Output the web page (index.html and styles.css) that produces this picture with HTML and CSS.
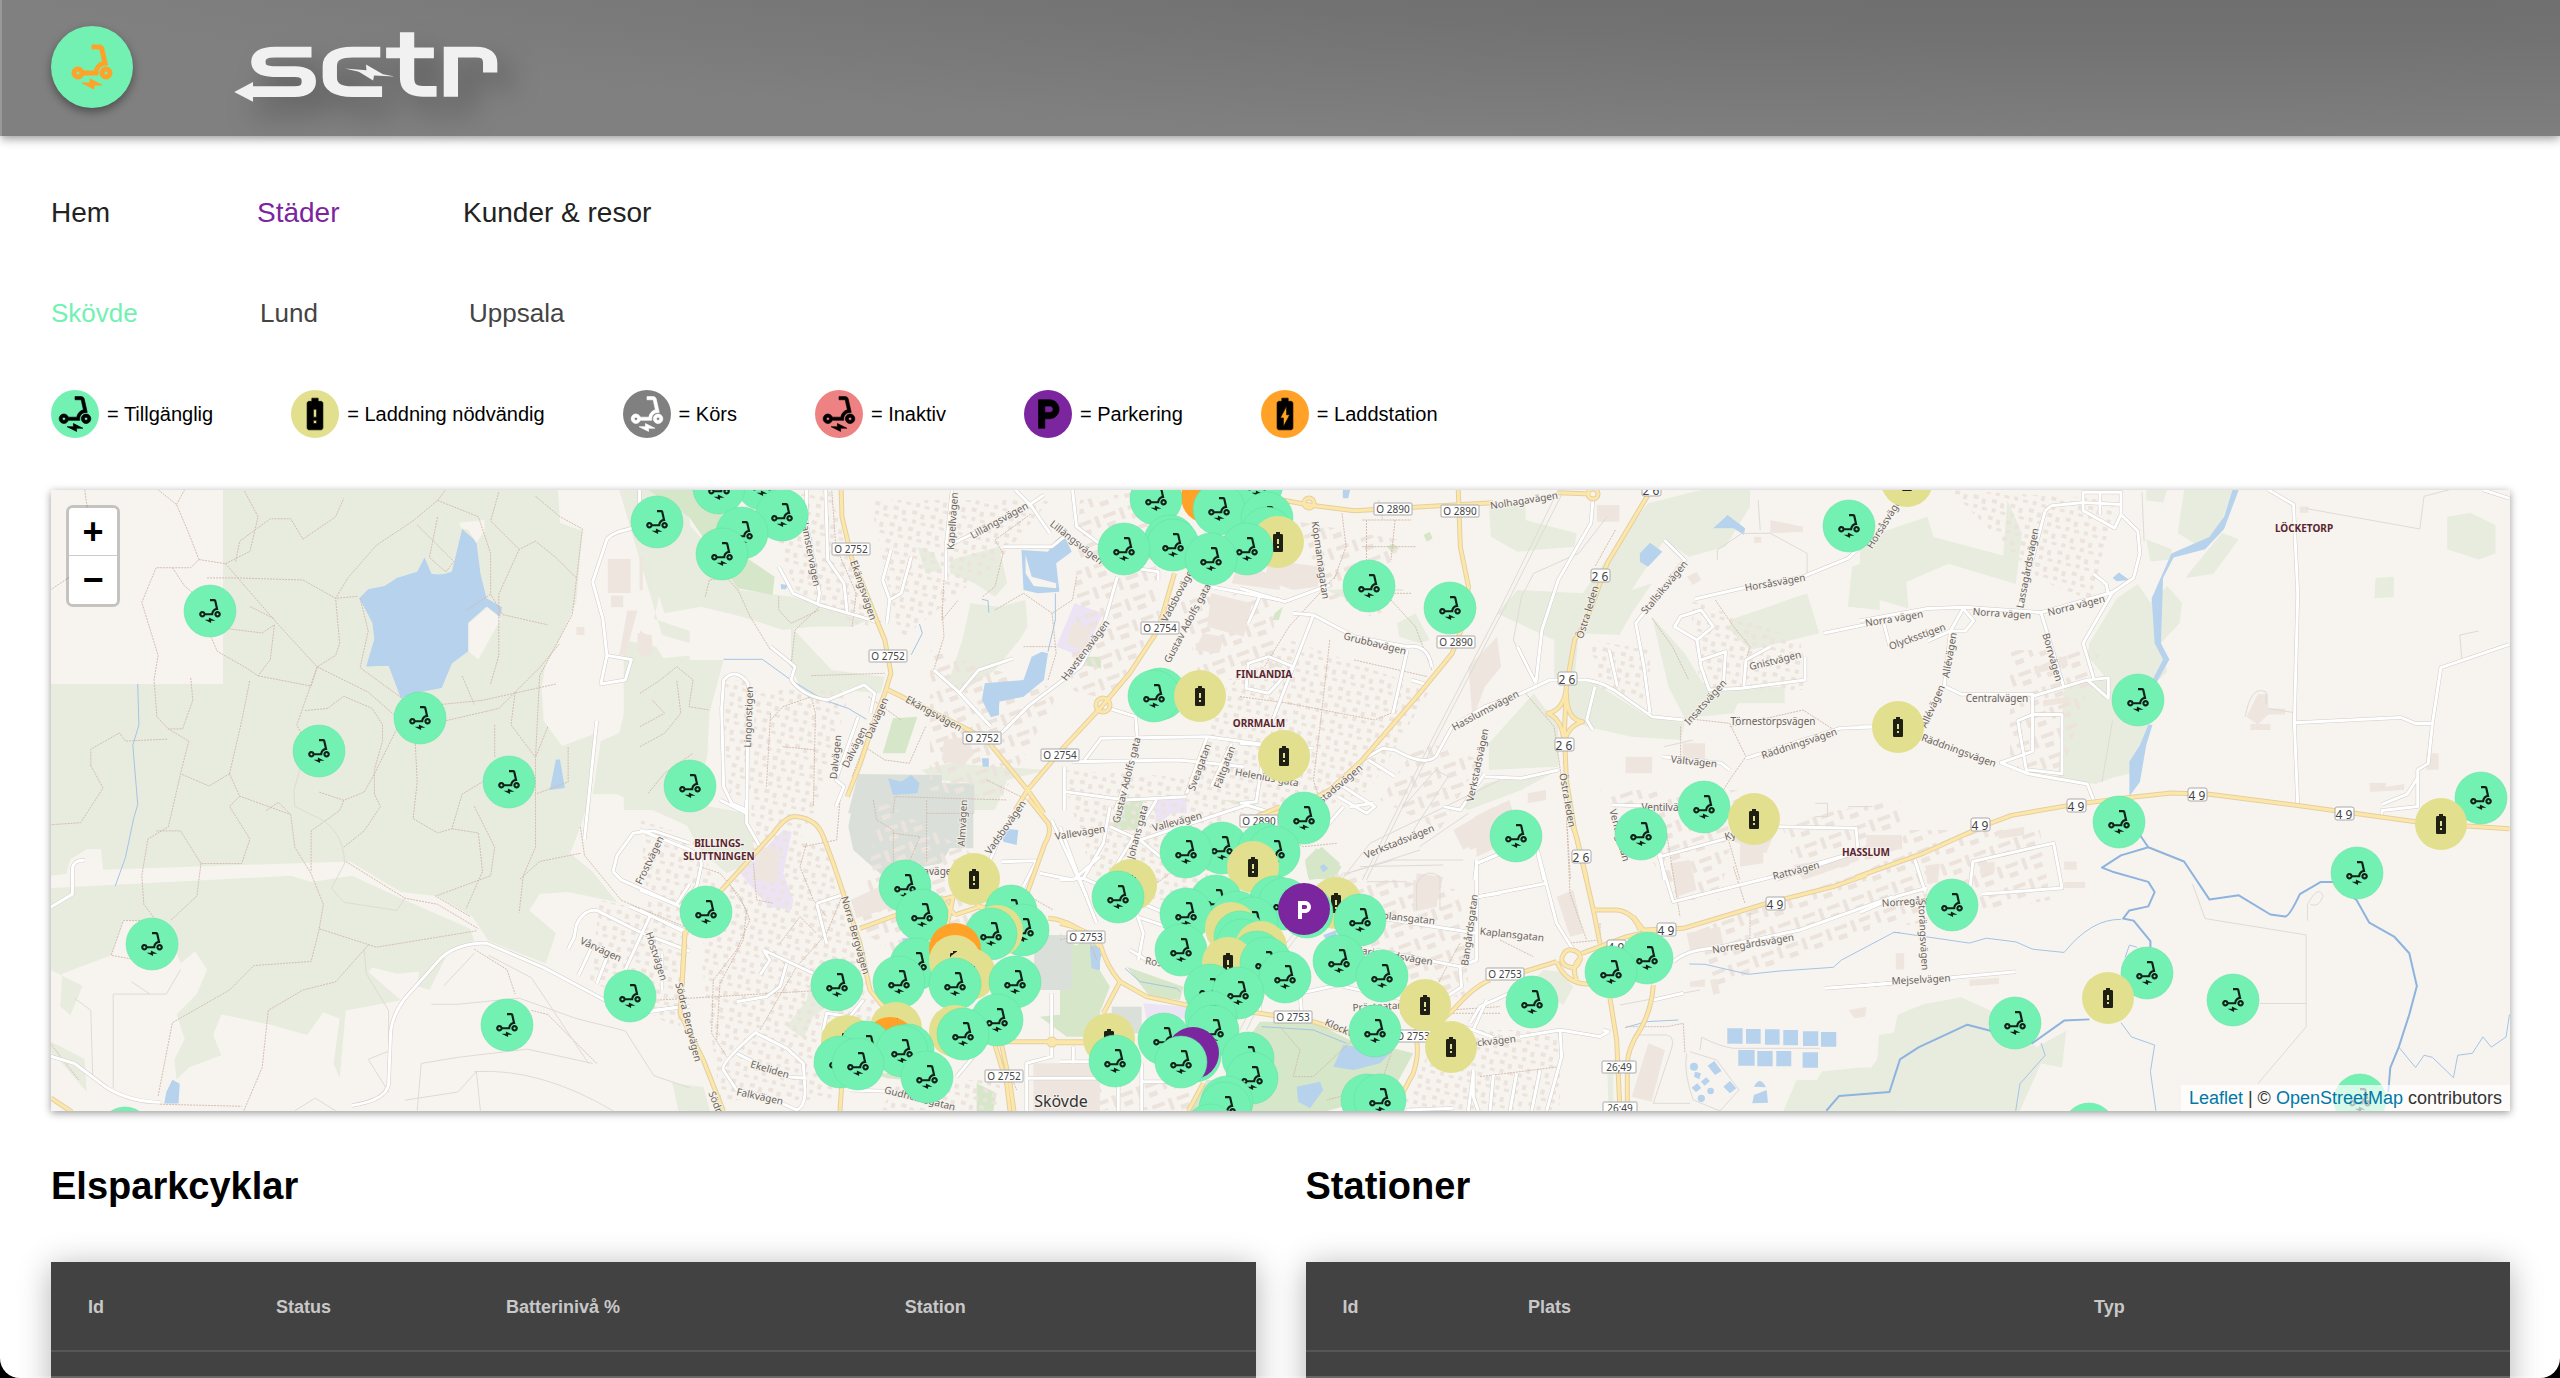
FILE: index.html
```html
<!DOCTYPE html>
<html lang="sv">
<head>
<meta charset="utf-8">
<title>sctr – Städer</title>
<link rel="stylesheet" href="styles.css">
</head>
<body>
<svg class="sprite" aria-hidden="true">
  <defs>
    <symbol id="i-scooter" viewBox="0 0 24 24"><path d="M7.82 16H15v-1c0-2.21 1.79-4 4-4h.74l-1.9-8.44C17.63 1.65 16.82 1 15.89 1H12v2h3.89l1.4 6.25h-.01c-2.16.65-3.81 2.5-4.15 4.75H7.82C7.34 12.66 5.96 11.75 4.4 12.04c-1.16.21-2.13 1.17-2.34 2.34C1.71 16.34 3.23 18 5 18c1.31 0 2.42-.83 2.82-2zM5 16c-.55 0-1-.45-1-1s.45-1 1-1 1 .45 1 1-.45 1-1 1zM19 12c-1.66 0-3 1.34-3 3s1.34 3 3 3 3-1.34 3-3-1.34-3-3-3zm0 4c-.55 0-1-.45-1-1s.45-1 1-1 1 .45 1 1-.45 1-1 1zM11 20H7l6 3v-2h4l-6-3z"/></symbol>
    <symbol id="i-alert" viewBox="0 0 24 24"><path d="M15.67 4H14V2h-4v2H8.33C7.6 4 7 4.6 7 5.33v15.33C7 21.4 7.6 22 8.33 22h7.33c.74 0 1.34-.6 1.34-1.33V5.33C17 4.6 16.4 4 15.67 4zM13 18h-2v-2h2v2zm0-4h-2V9h2v5z"/></symbol>
    <symbol id="i-charge" viewBox="0 0 24 24"><path d="M15.67 4H14V2h-4v2H8.33C7.6 4 7 4.6 7 5.33v15.33C7 21.4 7.6 22 8.33 22h7.33c.74 0 1.34-.6 1.34-1.33V5.33C17 4.6 16.4 4 15.67 4zM11 20v-5.5H9L13 7v5.5h2L11 20z"/></symbol>
    <symbol id="i-parking" viewBox="0 0 24 24"><path d="M13 3H6v18h4v-6h3c3.31 0 6-2.69 6-6s-2.69-6-6-6zm.2 8H10V7h3.2c1.1 0 2 .9 2 2s-.9 2-2 2z"/></symbol>
    <g id="s"><circle r="26" fill="#72f1b2" stroke="#63e0a2" stroke-opacity=".5"/><use class="ink" href="#i-scooter" x="-13" y="-13" width="26" height="26"/></g>
    <g id="b"><circle r="26" fill="#e2e08e"/><use class="ink" href="#i-alert" x="-12" y="-12" width="24" height="24"/></g>
    <g id="c"><circle r="26" fill="#ffa227"/><use class="ink" href="#i-charge" x="-12" y="-12" width="24" height="24"/></g>
    <g id="p"><circle r="26" fill="#7b259f"/><use href="#i-parking" x="-12" y="-11" width="24" height="24" fill="#fff"/></g>
  </defs>
</svg>

<header class="top">
  <a class="badge" href="#" aria-label="Start"><svg width="48" height="48"><use href="#i-scooter"/></svg></a>
  <svg class="wordmark" viewBox="520 95 600 215" preserveAspectRatio="none" role="img" aria-label="sctr">
    <g fill="none" stroke="#f1f1f1" stroke-width="32">
      <path d="M698 158H616Q579 158 579 187Q579 216 612 216H660Q692 216 692 246Q692 276 660 276H560"/>
      <path d="M852 158H790Q739 158 739 200V234Q739 276 790 276H856"/>
      <path d="M912 99V236Q912 275 946 275H978M865 160H972"/>
      <path d="M1010 291V158H1066Q1098 158 1098 190V219"/>
    </g>
    <path fill="#f1f1f1" d="M525 277L567 247V306ZM773 207L821 212L820 195L858 224L884 231L838 228L836 243L804 217Z"/>
  </svg>
</header>

<main class="page">
  <nav class="nav nav-main">
    <a href="#">Hem</a><a href="#" class="active">Städer</a><a href="#">Kunder &amp; resor</a>
  </nav>
  <nav class="nav nav-city">
    <a href="#" class="active">Skövde</a><a href="#">Lund</a><a href="#">Uppsala</a>
  </nav>
  <ul class="legend">
    <li><span class="dot green"><svg><use href="#i-scooter"/></svg></span>= Tillgänglig</li>
    <li><span class="dot yellow"><svg><use href="#i-alert"/></svg></span>= Laddning nödvändig</li>
    <li><span class="dot gray"><svg><use href="#i-scooter"/></svg></span>= Körs</li>
    <li><span class="dot red"><svg><use href="#i-scooter"/></svg></span>= Inaktiv</li>
    <li><span class="dot purple"><svg><use href="#i-parking"/></svg></span>= Parkering</li>
    <li><span class="dot orange"><svg><use href="#i-charge"/></svg></span>= Laddstation</li>
  </ul>

  <section class="map">
    <svg class="canvas" viewBox="51 490 2459 621" preserveAspectRatio="xMidYMid slice">
      <defs>
        <pattern id="houses" width="19" height="17" patternUnits="userSpaceOnUse" patternTransform="rotate(14)"><path fill="#ece3dc" d="M2 2h5v4h-5zM11 4h4v5h-4zM4 11h4v4h-4zM13 12h5v3h-5z"/></pattern>
        <pattern id="houses2" width="26" height="22" patternUnits="userSpaceOnUse" patternTransform="rotate(-20)"><path fill="#ece3dc" d="M2 3h13v4h-13zM19 2h4v12h-4zM3 12h9v5h-9z"/></pattern>

        <path id="rA" vector-effect="non-scaling-stroke" transform="translate(50 480) scale(.408)" d="M0 1048L55 1015V950Q60 930 85 932M0 1412L60 1430L140 1490Q200 1525 270 1525M740 1533Q825 1520 830 1480L835 1350Q840 1310 870 1270L960 1170Q1000 1135 1070 1135L1210 1195L1360 1275M1445 24V80Q1440 115 1420 120Q1375 130 1365 145L1330 250L1355 340L1365 430L1425 440L1410 490L1350 500L1365 430M1340 590L1310 880M1380 960L1390 920L1430 865L1480 860L1568 890M1380 960L1400 980L1535 1040L1568 990M1270 1150L1285 1120L1290 1090Q1310 1050 1340 1055L1450 1110L1568 1155M1470 1070L1410 1200M1330 1140L1295 1215M1365 1170L1340 1235M1470 1300L1568 1290M1420 1045L1568 1110M1500 1160V1250"/>
        <path id="rB" vector-effect="non-scaling-stroke" transform="translate(640 480) scale(.408 .3333)" d="M455 30L460 240L500 310L508 400M750 300V200L765 30M750 200L810 165L960 70L990 45M920 30L960 80L1005 160M1060 30L1070 140L1125 190M1170 290L1140 420L1080 560L950 680L885 760M720 570L780 635L860 740M785 635L830 570L915 535M340 260L375 340L440 375L540 410L590 430M408 30V130L440 340L435 375M615 210L595 300L612 360L605 430M665 230L640 340L612 360M1190 260L1270 275V300M1400 320L1568 360M1135 680L1215 710M1090 840L1130 775L1390 770L1568 800M1060 845L1320 840L1480 860M1040 990V860M1390 770L1340 940M1450 790L1400 920M1215 710L1220 800L1165 990M1040 935L1190 960L1340 950M320 500L380 560L370 600Q400 650 460 660L550 615L575 640L565 700M200 690L205 600Q235 560 265 610L262 990M200 680L205 920L225 970L260 990M480 980L500 920L480 900L535 710M890 200L1010 200L1040 170"/>
        <path id="rC" vector-effect="non-scaling-stroke" transform="translate(640 800) scale(.3333)" d="M0 90L150 150Q190 170 183 200L170 260L120 320L100 310L0 270M0 330L140 400M320 0V70L360 140M240 0L320 40M370 450L520 520M440 490L420 560L380 590L290 605M370 450L390 480L360 525M530 310L620 280M530 310L560 430M350 695Q240 790 250 810L290 870L380 890L470 930Q495 920 495 870L490 790L440 745L350 700M0 640L120 620M290 760L350 790M440 830L500 835M630 870L780 875L940 920M950 830L1000 770M1235 580V770L1160 790V933M1160 835H1380M1300 740V790M1085 185L1190 182L1150 260M1235 60L1340 290M1200 220L1300 240L1380 170M1050 180L1090 90M550 690L560 640L630 650L670 600"/>
        <path id="rD" vector-effect="non-scaling-stroke" transform="translate(1060 800) scale(.3333)" d="M0 80L60 240L110 370M0 240L70 235L130 130L150 20M150 80L240 120L300 170M240 120L560 15L640 40M290 0L160 210M70 235L340 350M230 350L380 400M210 450L260 480L380 500M235 480L250 400L230 340M390 200L300 170M600 640V560M720 580L860 550M715 520L725 640M850 560L1040 600M900 345L1250 400M950 450L1200 500M1250 180V480L1200 500L1205 560L1130 610M1250 190L1320 160M1250 290L1320 280M1180 670L1240 690L1320 720M1240 690L1280 600M245 790V933M0 785H100M175 933V760M245 845H400M1040 930L1180 925M1240 820L1225 933M790 90L850 20M870 20L940 10"/>
        <path id="rE" vector-effect="non-scaling-stroke" transform="translate(1240 480) scale(.408 .3333)" d="M865 60L860 130L780 300L740 450L725 610M680 500L725 610M520 740L600 680L690 640L760 600L850 600Q900 610 940 650L1010 710L1090 720M870 620L850 720L865 750M1040 180L1090 240L970 430L990 560L1005 700M1115 357L1230 325L1380 290L1490 235L1530 190M1120 480L1065 440L1080 410L1130 390L1160 440L1120 480L1130 560L1150 630L1230 625L1385 600V530M1130 540L1190 515L1185 610M1235 620L1240 540L1300 500M1430 460L1568 425M1240 835L1470 745L1568 740M905 510L925 620M520 740L480 830Q450 860 380 810L350 805L300 840M315 840L380 890M600 890L690 895L780 870M500 980L540 990L600 880M0 325L110 365L220 315M130 400L180 405L280 470L410 500Q460 490 470 560M180 405L80 720M410 510L375 700M420 600L460 615M50 345L20 430M910 975L1110 980M1320 1040L1510 1045L1515 1115M1030 1130L1210 1070M1040 1200L1030 1120M575 1200L580 1150L640 1120M730 1120L745 1200M0 790L180 805M0 970L40 965L60 800M240 910L330 980L310 1000L240 950M1035 830L1180 850L1200 870M1310 1200L1515 1115M20 550L70 530L130 560L70 640L15 625Z"/>
        <path id="rF" vector-effect="non-scaling-stroke" transform="translate(1860 480) scale(.4209 .408)" d="M0 345L160 315L250 312L430 325L600 275L650 240L665 180L660 125L620 85M440 75L380 310M440 75L455 63L530 55L620 60V85L605 118L530 75V30H620V60M570 30V85M600 275L530 400L555 485M430 325L485 510M410 530L540 490L590 485V535L540 490M200 505L240 525H410V665L335 693L400 720L540 745L555 785M200 505L215 370L160 395M215 370L245 315L270 345L250 370H215M55 345L70 405M970 24L1030 60L1040 280L1032 595L1040 798M1032 595L1285 582L1320 597H1360M1543 403L1380 460L1360 597L1350 695L1325 710V800L1240 810V825M1325 730L1300 770L1240 795M260 1015L268 935L460 890L480 1000L290 1015M130 930L155 1010M0 1060L90 1020L160 1000M0 1240L370 1205M555 230L585 255L590 280M0 605H90M1480 24L1543 45M410 575H480V720L395 710L375 590Z"/>
        <path id="rG" vector-effect="non-scaling-stroke" transform="translate(1400 800) scale(.3333)" d="M235 290L440 250M410 140L470 370L520 450M210 670L240 620L340 575M360 710L480 690L600 710L625 695L610 690M480 690L485 770L440 933M775 160L820 305L1100 235L1340 165M820 485Q860 450 940 445L1200 390L1480 290M1275 565L1480 550M280 825L270 933M350 820L330 933M220 810V890L235 933M420 810L395 933M760 600L850 580"/>

        <path id="mB" vector-effect="non-scaling-stroke" transform="translate(640 480) scale(.408 .3333)" d="M493 30L495 110L520 240L545 310L580 420L600 480L615 580L600 640L575 720L540 850L508 950M600 625L790 740L850 780L950 930L990 1000M1310 280L1270 450L1200 580L1135 675L1040 800L950 930L920 990"/>
        <path id="mC" vector-effect="non-scaling-stroke" transform="translate(640 800) scale(.3333)" d="M245 270L400 100Q440 45 470 50Q530 55 550 110L580 190L610 280L660 430L690 570L730 620M245 270L135 400L120 640L190 780L250 933M660 385L770 345L900 300L940 290L920 380M1165 -5L1225 70Q1235 100 1215 130L1165 270L1140 340M945 345L1020 320L1100 330M900 290L945 345M1010 310L1030 330M1225 355Q1300 360 1380 440M605 860L600 933M1050 725H1340M1065 735L1100 850L1110 933M1085 735L1110 850L1122 933"/>
        <path id="mD" vector-effect="non-scaling-stroke" transform="translate(1060 800) scale(.3333)" d="M0 370Q90 390 120 430Q140 500 180 545L260 590L380 615L600 640L760 665L870 700H1060Q1085 740 1060 820L1000 930M180 545L130 640M590 50L660 20M385 933L430 850M1100 700L1180 630Q1240 560 1290 540M-30 728H75"/>
        <path id="mE" vector-effect="non-scaling-stroke" transform="translate(1240 480) scale(.408 .3333)" d="M80 55L170 75L280 92L620 68M780 38L860 42M535 30L540 200L560 320L545 440L520 520L440 640L300 840L220 930L150 975L60 1010M1000 45L900 250L850 420L820 480L800 620L795 760L800 900L820 1050L850 1200M800 620Q795 690 755 700Q790 720 793 780M800 640Q800 720 840 725Q800 740 796 790"/>
        <path id="mF" vector-effect="non-scaling-stroke" transform="translate(1860 480) scale(.4209 .408)" d="M-10 974L150 915L300 845L360 822L510 795L640 778L740 767L830 770L1040 798L1230 825L1350 842L1543 855"/>
        <path id="mG" vector-effect="non-scaling-stroke" transform="translate(1400 800) scale(.3333)" d="M510 60L530 110L580 330L600 430M580 330H650Q700 335 720 390M700 350L730 390L850 385L1100 310L1300 260L1400 225M340 525L470 485M545 460L680 410L770 390M470 485Q500 555 570 552M545 470Q510 500 530 540M630 595L650 720L660 933M760 555Q755 630 720 690Q680 750 682 800V933M485 475Q495 445 515 450Q545 455 540 480Q530 510 505 500Q485 495 485 475"/>
      </defs>

      <rect class="land" x="0" y="400" width="2560" height="800"/>

      <g class="forest">
        <path transform="translate(50 480) scale(.408)" d="M0 500H424V24H1245L1250 105L1305 125L1290 300L1250 390L1215 450L1205 510L1210 590L1255 652L1340 620L1325 770L1300 850L1275 915L1330 960L1390 1035L1270 1010L1200 1015L1175 1055L1240 1110L1215 1185L1075 1130L1035 1070L950 1020L860 1010L735 935L130 955L125 905H90L50 930L40 965L0 970ZM0 1000L590 970L640 985L740 970L860 1025L1030 1100L1040 1130L980 1150L930 1250L900 1240L905 1205L850 1210L790 1195L780 1205L860 1275L725 1300L710 1465L695 1430L710 1320L670 1305L630 1360L540 1335L420 1310L400 1360L420 1410L340 1440L310 1470L305 1420L330 1370L310 1310L360 1260L385 1200L355 1155L320 1185L300 1130L250 1080H180L150 1165L30 1210L25 1290L50 1312L80 1240L0 1200ZM0 1375L85 1420L90 1500L30 1430L0 1400ZM1395 24H1568V170H1520L1480 340L1568 370V430L1470 440L1410 560L1395 620L1350 640L1330 770L1390 770L1568 850V400L1500 380ZM1525 1475L1600 1500V1546H1540Z"/>
        <path transform="translate(640 480) scale(.408 .3333)" d="M0 170L45 30L235 290L245 330L375 350L440 375L520 410L560 420L520 440L420 440L350 450L250 410L150 380L60 400ZM-40 480L40 500L60 540H205L170 700L165 830L130 990H-40ZM370 440L470 570L600 590L590 640L500 630L470 660L400 640L370 560ZM760 240L880 200L900 310L870 350L820 310L760 280ZM810 370L880 380L945 360L950 440L930 480L870 570L790 635L755 610L790 480ZM680 200L720 220L740 270L700 280ZM690 870L760 850L1000 870L900 900L870 990H820V910L720 900Z"/>
        <path transform="translate(640 800) scale(.3333)" d="M100 0L320 40L350 180L260 220L180 150ZM440 680L500 600L515 530L560 620L520 650L490 715ZM95 850L190 860L210 933H140Z"/>
        <path transform="translate(1240 480) scale(.408 .3333)" d="M610 80L700 70V120L825 160L820 200L680 215L615 170ZM1000 70L1130 30H1250V80L1190 200L1100 230L1040 180L960 330L1010 310L960 400L930 465L830 460L820 600H770V480L630 400L680 330L840 340L960 130ZM800 600L870 610L1000 710L1090 730L1080 780L960 770L850 740L800 700ZM610 790L720 640L780 740V860L610 870ZM600 910L780 870L690 930L560 990L540 980ZM1010 410L1090 520L1140 620H1335V670H1220L1210 700L1090 715L1050 620ZM1200 420L1390 340L1420 460L1250 510L1200 450ZM1500 260L1568 230V390L1490 380ZM385 430L430 400L465 480L440 490L390 470ZM210 330L290 325L340 370L250 350Z"/>
        <path transform="translate(1860 480) scale(.4209 .408)" d="M0 145L160 90L175 140L340 185L350 50L385 130L370 255L210 205L110 250L115 315L0 280ZM770 24H885L850 130L800 160L755 130ZM780 230L860 130L900 145L840 230L775 240ZM680 24H730L720 55L680 50ZM680 145L740 170V195L690 200ZM610 290L660 255L690 300L730 260L765 300L760 350L715 400L730 470L700 500L690 600L640 720L600 730L560 745L470 735L485 500L580 480L540 430L545 400ZM1395 90L1450 80L1510 110V180L1470 195L1395 170ZM1225 240L1268 237V287L1222 290ZM0 1440L40 1440L45 1360L80 1355L90 1310L150 1285L240 1268L310 1300L420 1390L490 1350L480 1440L430 1430L380 1546H-150L-90 1450Z"/>
        <path transform="translate(1400 800) scale(.3333)" d="M430 510L480 515L520 560L490 615L430 580L400 540ZM1150 933L1190 840H1300L1370 860L1430 780L1460 700L1500 720V933ZM622 820H640V933H626Z"/>
      </g>
      <g class="park">
        <path transform="translate(640 480) scale(.408 .3333)" d="M20 30H190L220 200L330 290L325 345L240 325L120 110ZM620 715L680 710L650 820H595ZM1090 530H1130V565L1085 555ZM1180 945L1230 960L1225 1040H1160Z"/>
        <path transform="translate(640 800) scale(.3333)" d="M1380 400L1300 440V640L1200 650L1280 710H1380ZM1010 850L1070 880L1060 933H1010ZM700 820H800V840L740 835Z"/>
        <path transform="translate(1060 800) scale(.3333)" d="M175 0H250L235 90H155ZM735 180L770 145L845 200L820 240L745 235ZM0 400L100 480L150 560L110 660L0 680ZM200 500L370 560L360 600L270 590ZM600 665L760 665L870 720L1000 745L1060 760L1000 870L960 890L800 933H380L440 840H600L560 720ZM490 0L600 10L560 20Z"/>
        <path transform="translate(1240 480) scale(.408 .3333)" d="M160 1150L200 1100L245 1150L230 1190L170 1200ZM360 200L375 190L390 205L375 220ZM450 165L465 155L472 175L458 185ZM85 400L105 380L95 420H80Z"/>
      </g>
      <g class="grave">
        <path transform="translate(640 480) scale(.408 .3333)" d="M535 882L740 885V910H820V1000H510Z"/>
        <path transform="translate(640 800) scale(.3333)" d="M640 0H1000V145H930L905 190L725 225L640 150L625 80ZM1185 405H1295V570H1180Z"/>
        <path transform="translate(1060 800) scale(.3333)" d="M155 620H245V700H155Z"/>
      </g>
      <g class="retail">
        <path transform="translate(640 480) scale(.408 .3333)" d="M1065 370L1135 400L1085 530L1020 500ZM1270 950L1340 955V1000H1260Z"/>
        <path transform="translate(640 800) scale(.3333)" d="M430 90L455 95L430 220L460 300L455 330L385 320L300 220Z"/>
        <path transform="translate(1060 800) scale(.3333)" d="M290 0H380L300 70H285ZM250 610L380 620V655L260 660Z"/>
      </g>

      <g fill="url(#houses)">
        <path d="M720 680H745L760 790L730 800ZM755 690H850L820 800L790 860H750ZM760 500L830 490L870 630L800 600ZM870 500H1050L1000 560L900 640ZM1290 640L1430 690L1370 790L1260 830L1200 790L1210 700ZM1060 770L1240 780L1200 900L1100 900ZM640 820L700 840L720 900L650 930ZM600 900L690 920L680 1030L590 980ZM760 830L830 850L850 930L880 1010L830 1100H720L700 950ZM1440 1030L1560 1030V1110H1400ZM1690 600L1800 640L1810 690L1700 690ZM1590 640L1650 650V700L1600 690ZM1950 490L2120 500L2090 600L2040 580ZM900 1080L1000 1080V1110H880Z"/>
      </g>
      <g fill="url(#houses2)">
        <path d="M1080 500L1150 490L1160 620L1110 700L1070 690ZM930 650L1060 690L1000 800L930 790ZM1290 520L1400 540L1380 620L1330 600ZM1180 600L1270 590L1280 680L1200 680ZM1420 740L1480 760L1440 830L1380 800ZM1600 790L1740 790L1720 900L1680 900ZM1860 880L1910 830L2040 830L2050 900L1880 930ZM1690 930L1870 870L1870 930L1720 990ZM1060 1080H1190V1110H1060ZM1330 870L1460 890L1470 1000L1340 970ZM1780 820L1900 800V850L1800 880ZM2010 650L2100 650L2060 780L2010 770ZM880 800L1000 870L970 1000L860 930Z"/>
      </g>
      <g class="building">
        <path transform="translate(50 480) scale(.408)" d="M1367 193H1423V277H1367ZM1375 283H1405V312H1375ZM1440 375L1475 380V430L1440 420ZM1415 320H1440L1410 430H1395ZM1445 190H1453V270H1445ZM1290 360H1310V380H1290Z"/>
        <path transform="translate(640 480) scale(.408 .3333)" d="M0 450L30 480V520L0 530ZM1060 430L1110 440L1085 510L1045 490ZM745 780L800 770L820 820L790 860L740 840ZM1400 340L1500 370L1480 470L1390 440ZM1380 460L1430 470L1420 520L1360 510ZM1470 240L1568 300V330L1450 310Z"/>
        <path transform="translate(640 800) scale(.3333)" d="M632 300L740 250L760 320L650 355ZM355 140L420 150L410 250L340 240ZM1180 790H1380V933H1180Z"/>
        <path transform="translate(1060 800) scale(.3333)" d="M1180 90L1300 20V100L1210 150ZM1070 220L1150 230L1130 310H1065Z"/>
        <path transform="translate(1240 480) scale(.408 .3333)" d="M70 240L200 260L190 320L130 330L60 300ZM575 1010L660 960L690 1070L580 1130ZM875 75H930V125H875ZM560 560L630 470L640 560L600 620L570 720ZM1085 790H1140V850H1085ZM945 830H1010V880H945ZM1210 1020L1310 1060L1290 1120L1200 1080ZM705 940L750 930V960L705 970ZM1260 170H1278V188H1260ZM1300 120L1380 140V155L1300 160ZM1095 290L1120 275L1130 300L1110 315Z"/>
        <path transform="translate(1860 480) scale(.4209 .408)" d="M945 525H970V560H1010V575H970L945 600L918 580ZM928 598H975V613H928ZM1210 742H1250V752L1293 745V760L1212 765ZM415 460L490 430L495 455L415 475ZM435 540L500 530V545L435 555ZM330 860L390 850V870L330 880ZM155 945L190 940L185 985L160 990ZM15 870H100V905H15ZM85 1160H105V1200H85ZM260 1225L330 1220V1235L260 1240ZM485 935H515V955H485ZM485 985H535V1000H485ZM285 940L320 935V960L285 965ZM1345 670H1375V710H1345ZM1045 65H1065V80H1045Z"/>
        <path transform="translate(1400 800) scale(.3333)" d="M745 730L795 750L755 905L695 890ZM810 190L870 180L890 270L830 290ZM1020 120L1090 140V190L1020 200ZM40 240L120 235L110 320L40 335ZM180 80L270 60L290 120L210 150ZM860 400L960 380L970 430L870 450ZM470 290L520 270L550 400L510 410ZM870 545L915 538V560H870ZM930 540L950 536L960 580L940 585ZM1345 630L1400 620L1395 650L1365 655ZM1180 195L1370 165L1380 180L1210 240Z"/>
      </g>

      <g class="water">
        <path transform="translate(50 480) scale(.408)" d="M1010 120L1045 150L1055 230L1070 290L1108 312L1103 335L1070 310L1025 350V420L985 450L960 510L905 520L860 535L830 455L775 457L795 390L790 350L758 290L780 268L820 260L850 240L900 225L918 190L935 230Q960 235 985 225ZM1240 685H1250L1262 755L1225 760ZM300 1470L318 1480L315 1528H280L285 1500Z"/>
        <path class="land" transform="translate(50 480) scale(.408)" d="M1003 105L1065 98V125L1045 155L1025 122L1008 118ZM1072 312L1105 340L1050 440L1026 420V352Z"/>
        <path transform="translate(640 480) scale(.408 .3333)" fill-rule="evenodd" d="M935 210L1000 215Q1020 170 1040 165L1058 215L1020 250L1028 335L975 340L940 330ZM945 225L960 290L1020 310V325L965 318L945 280ZM985 515L1000 520L990 600L940 650L880 665V705L860 712L838 660L845 610L940 600L960 530ZM608 895L640 905L665 885L685 910L680 940L620 945ZM838 835H855V860H840ZM345 312L362 315L358 328H346Z"/>
        <path transform="translate(640 800) scale(.3333)" d="M1085 85L1135 90L1130 135L1090 125ZM1350 440L1380 430V510L1355 500ZM785 415H830L800 440Z"/>
        <path transform="translate(1060 800) scale(.3333)" d="M90 440L125 460L115 510L95 505ZM780 200L790 192L805 205L790 217ZM790 405L830 390V420L795 415ZM850 735L920 745L1000 750L960 790L880 810L820 800ZM710 860L780 845L790 870L750 925L715 905Z"/>
        <path transform="translate(1240 480) scale(.408 .3333)" d="M1160 145L1195 105L1238 145L1235 165L1210 145ZM980 220L1005 188L1035 215L1000 260L980 245ZM252 30H270L265 55H252ZM197 1165L205 1155L215 1165L205 1175Z"/>
        <path transform="translate(1860 480) scale(.4209 .408)" d="M885 24H900L865 120L820 170L745 190L720 240L715 400L735 440L705 495L695 490L720 440L700 400L693 290L740 180L830 140L865 90ZM685 600L695 600L680 650L665 740L640 775L640 690L665 650ZM600 240L615 227L640 245L610 248Z"/>
        <path transform="translate(1400 800) scale(.3333)" d="M982 685H1028V731H982ZM1038 687H1082V731H1038ZM1095 688H1139V734H1095ZM1150 690H1194V736H1150ZM1209 694H1255V738H1209ZM1263 696H1309V740H1263ZM1015 750H1064V797H1015ZM1072 753H1118V799H1072ZM1129 753H1174V799H1129ZM1208 757H1254V803H1208ZM923 797L943 783L965 813L945 825ZM970 860L990 843L1009 865L990 880ZM885 815L903 820L898 838L882 830ZM903 845L918 832L930 843L914 857ZM875 863L892 850L904 864L888 877ZM870 800A12 12 0 0 1 894 800A12 12 0 0 1 870 800ZM893 895A11 11 0 0 1 915 895A11 11 0 0 1 893 895ZM922 873A10 10 0 0 1 942 873A10 10 0 0 1 922 873ZM1062 860Q1080 825 1098 862ZM1057 910L1062 885L1100 870L1104 908Z"/>
      </g>
      <g class="stream">
        <path vector-effect="non-scaling-stroke" transform="translate(50 480) scale(.408)" d="M215 500L218 600L203 650L215 795L205 830L185 925L160 995"/>
        <path vector-effect="non-scaling-stroke" transform="translate(640 480) scale(.408 .3333)" d="M205 538H300L370 600L450 660L510 685L555 718M1018 340V420L1000 515M685 432L692 460L665 524M838 358L853 362L855 398"/>
        <path vector-effect="non-scaling-stroke" transform="translate(1060 800) scale(.3333)" d="M195 505L240 545L350 565L360 575M605 680L760 690L860 730"/>
        <path vector-effect="non-scaling-stroke" transform="translate(1400 800) scale(.3333)" d="M675 683L740 665L835 660M868 492L915 493L1045 523L1140 513L1300 502L1325 480L1480 398H1500"/>
        <path vector-effect="non-scaling-stroke" transform="translate(1860 480) scale(.4209 .408)" d="M80 1108L260 1135L300 1123L370 1132L410 1150L485 1158Q550 1075 620 1077M620 1330L645 1365L700 1385L690 1450L703 1546M1280 1390L1320 1440L1340 1410L1360 1415L1410 1465L1420 1410L1455 1405L1480 1365L1500 1390L1535 1365L1543 1310M430 1380L440 1410L380 1480L370 1546M630 1170L640 1140L658 1145"/>
        <path class="wide" vector-effect="non-scaling-stroke" transform="translate(1860 480) scale(.4209 .408)" d="M665 870L685 900L620 920L575 950L600 960L685 985L700 1010L685 1045L640 1055L625 1075L650 1080L690 1130V1145M685 900L770 935L830 1028L900 1018L975 1065L1010 1070Q1020 1070 1045 1015L1095 985H1130L1180 1030L1210 1085L1270 1120L1305 1160L1323 1240L1305 1310L1280 1390L1260 1440L1255 1500M-80 1546L-50 1510L70 1500L95 1420L140 1390L255 1335L310 1350L410 1380L485 1325L545 1322"/>
      </g>

      <g class="trail">
        <path vector-effect="non-scaling-stroke" transform="translate(50 480) scale(.408)" d="M85 24L100 130M265 24L310 60L340 130L365 195L345 215L260 215L225 300L265 430L255 490L262 580L290 610L340 640L320 720L290 850L240 880L225 970L230 1040L260 1080M310 60L330 24M365 195L430 205L490 175L510 90L475 24M430 205L560 355L655 458L780 520L860 590M300 215L330 260L390 310M385 240L460 240L550 243L620 245L700 290L755 285M455 200L465 150L540 95L590 95L620 145L700 90L720 45M490 310L550 340M550 355L540 440L510 480L480 460L410 420L395 385M440 365L520 375L550 355M510 480L640 505L655 458L700 430L710 400L700 290L730 240L800 160L890 100L950 50L970 24M655 458L605 600L625 640M625 565L680 560L720 530L790 560L815 600V640L795 710V770L810 800L770 860L720 900M900 110L940 150L990 200L970 225L930 190L950 90M660 765L720 785L770 765L790 730L860 590M720 785L710 810L640 860V960M440 720L390 750L320 720M440 720L465 775L590 820L600 900L640 965L670 1040L660 1100L800 1145L1045 1105M590 820L560 790L530 810M440 720L470 590L490 490M345 485L350 540L325 610H290M100 700V660L170 620L185 640L290 635M100 700L130 755L75 840L0 845M465 775L440 800L490 880L470 940L370 940L320 860H260M370 940L360 1020L295 1080M725 935L870 1025L950 1040L1050 1100M895 640L900 740L890 830L950 865L985 855L1010 770L1060 740M1040 800L1090 900L1080 970L945 1020L1030 1070M985 855L1050 865L1060 960L1020 1050M1090 600V680M1140 520L1130 600L1190 680V900L1160 970L1150 1060M960 550L1060 540L1240 500M970 590L1100 560L1200 460L1250 400M1010 480L1040 550M1100 30L1080 100L1150 170L1190 150L1240 190L1290 240M950 50L1050 90L1080 180V280L1110 330L1220 355M1080 280L1020 320M1190 40L1250 90L1305 120L1280 330L1200 480L1190 680M1150 170L1100 280V430L1080 500M760 290L780 370L760 460L870 540M250 1080H180L150 1165L260 1185M660 1100L640 1180L500 1190L440 1250L300 1330L265 1510M780 1140L700 1230L620 1250L535 1300L520 1440L475 1546M1300 850L1310 920L1400 1030L1568 1100M1300 915L1200 935L1150 980M0 270L60 230L110 240M1180 1300L1220 1310L1340 1430M0 1380L70 1470M270 1530L470 1535M1220 605L1190 680M1270 655V740L1190 770M1040 1150L1120 1200L1140 1260"/>
        <path vector-effect="non-scaling-stroke" transform="translate(640 480) scale(.408 .3333)" d="M160 350L170 300L210 290L240 330L270 410L320 510M370 560L380 450L440 380M340 350V390L370 430L440 390M0 640L50 600L90 560L130 600L120 680L170 690M0 740L60 700L30 660M0 800L60 760L100 700L90 600M20 940L60 880L130 820M520 440L530 340L480 200L470 30M840 350L870 320L890 220L870 180L960 100M870 390L940 340L1010 400L1060 360L1070 290M745 300L740 420L780 360M720 570L745 470L740 380M1010 400L1020 520L1000 600M420 587L600 580M320 720L350 680L420 650L430 700L425 980M350 800L430 810M320 700L310 920M700 740L660 850L600 840L550 800M520 890L580 700M850 900L950 960M940 500L1020 500M560 650L640 720M620 1000L625 950L900 960"/>
        <path vector-effect="non-scaling-stroke" transform="translate(640 800) scale(.3333)" d="M180 200L240 220L300 290L330 360L290 450L220 540L215 700L260 770M260 240L320 330L310 420L240 550L230 720M500 130L480 200L520 300L560 350M420 430L480 350L530 400M610 280L560 400L470 500L360 690M600 0L590 120L490 140M700 0L710 60L760 90V190M760 100L840 110L810 180M860 40H1000M860 0V190M340 190L350 300L400 310M60 600L560 570M1100 800L1130 870M1170 290L1240 330"/>
        <path vector-effect="non-scaling-stroke" transform="translate(1060 800) scale(.3333)" d="M660 680L720 750L700 830L760 830L900 700M1000 740L960 860L800 900M640 90L730 140L830 130M0 420L80 400L110 480M110 300L220 300L330 220M1200 430L1150 520L1060 700M1320 640L1100 640"/>
        <path vector-effect="non-scaling-stroke" transform="translate(1240 480) scale(.408 .3333)" d="M240 280L120 440L60 560M250 100L260 200L230 300M0 650L120 670L330 720L370 700M220 480L200 700L180 900L200 980M280 330L350 370M370 360L430 440L470 570M260 340H420M280 540L460 590M700 640L770 740L800 1000L810 1200M1165 360L1210 440L1250 500L1240 540M1010 415L1060 500L1100 600M1090 715L1200 730L1240 830L1200 900L1170 960M1080 740V830M920 150L870 260M1450 745L1380 690L1200 740M300 120H420M300 200H430M310 120V240M380 120L370 240"/>
        <path vector-effect="non-scaling-stroke" transform="translate(1400 800) scale(.3333)" d="M600 370V420L500 430M500 60L510 280L560 420M1000 200L1035 310M980 100L1020 240M1050 340V420M680 680L800 680L850 670L855 760M800 100L840 350M0 640L300 620M300 420L400 470M240 830L480 800"/>
      </g>
      <g class="track">
        <path vector-effect="non-scaling-stroke" transform="translate(50 480) scale(.408)" d="M155 1260V1490M155 1260H285L320 1200M60 1270L100 1300L105 1470M200 1230L245 1260M935 1285H1000L1150 1270L1290 1320L1410 1350L1480 1460L1568 1490M900 1546L910 1430L1000 1415L1170 1395L1330 1430M1075 1165L1180 1220L1320 1430M965 1240L1040 1160M1045 1450L1000 1500L870 1520M1045 1450L1055 1546M1040 1450Q1200 1440 1380 1546M770 1150L775 1210L830 1300V1400L780 1420L830 1500M600 800L640 820Q720 850 722 940L690 1000L720 1035L850 1055L870 1025M615 700L598 760L600 800M600 1546L650 1515L700 1546"/>
        <path vector-effect="non-scaling-stroke" transform="translate(1060 800) scale(.3333)" d="M560 690L680 450L860 220L930 130L1320 -60M540 690L670 440L850 220M860 220L1000 180H1210M880 215L1080 150M900 200L1150 195M920 245H1040M1070 330V250Q1100 200 1140 230V330M600 200L700 260"/>
        <path vector-effect="non-scaling-stroke" transform="translate(1240 480) scale(.408 .3333)" d="M780 30L640 380L470 780L300 1200M790 40L650 380L480 780L310 1200M900 110L830 220L720 280L690 350L670 480L700 560M1170 240V210L1230 160H1300L1390 220V290M1270 60L1275 150M400 980L480 870L510 890L410 1080M310 330H400M350 120L340 60M440 1100L560 1000M1040 800L1110 780M1410 970H1440V1010H1410M1490 980H1550"/>
        <path vector-effect="non-scaling-stroke" transform="translate(1860 480) scale(.4209 .408)" d="M1060 70L1330 120L1340 40L1400 24M790 990L820 1075L1060 1115V1340L945 1480M950 1283H1060M1063 1080V1040Q1090 990 1100 1020Q1090 1050 1070 1040M575 740L600 590M675 150L670 30M1430 440L1425 380L1470 370M970 560L1030 570M915 580Q930 500 965 520V550"/>
        <path vector-effect="non-scaling-stroke" transform="translate(1400 800) scale(.3333)" d="M900 750L905 712Q960 740 1000 745H1260M860 760Q850 820 880 900L960 933L1017 870L950 780L870 755M660 615L900 570M700 705H800Q830 710 810 760L760 910H870"/>
      </g>

      <g class="casing">
        <use href="#rA"/><use href="#rB"/><use href="#rC"/><use href="#rD"/><use href="#rE"/><use href="#rF"/><use href="#rG"/>
      </g>
      <g class="road">
        <use href="#rA"/><use href="#rB"/><use href="#rC"/><use href="#rD"/><use href="#rE"/><use href="#rF"/><use href="#rG"/>
      </g>
      <g class="main-casing">
        <use href="#mB"/><use href="#mC"/><use href="#mD"/><use href="#mE"/><use href="#mF"/><use href="#mG"/>
        <path d="M685 931L682 986M51 1098L72 1112"/><circle cx="1103" cy="705" r="7"/><circle cx="1309" cy="503" r="5"/><circle cx="1593" cy="494" r="5"/><circle cx="1052" cy="1042" r="3"/>
      </g>
      <g class="main-road">
        <use href="#mB"/><use href="#mC"/><use href="#mD"/><use href="#mE"/><use href="#mF"/><use href="#mG"/>
        <path d="M685 931L682 986M51 1098L72 1112"/><circle cx="1103" cy="705" r="7"/><circle cx="1309" cy="503" r="5"/><circle cx="1593" cy="494" r="5"/><circle cx="1052" cy="1042" r="3"/>
      </g>

      <g class="street">
        <text transform="translate(952 521) rotate(-86)">Kapellvägen</text>
        <text transform="translate(999 520) rotate(-29)">Lillängsvägen</text>
        <text transform="translate(1077 542) rotate(38)">Lillängsvägen</text>
        <text transform="translate(811 552) rotate(79)">Hamstervägen</text>
        <text transform="translate(864 590) rotate(71)">Ekängsvägen</text>
        <text transform="translate(934 713) rotate(29)">Ekängsvägen</text>
        <text transform="translate(876 718) rotate(-66)">Dalvägen</text>
        <text transform="translate(854 747) rotate(-64)">Dalvägen</text>
        <text transform="translate(835 757) rotate(-84)">Dalvägen</text>
        <text transform="translate(748 717) rotate(-88)">Lingonstigen</text>
        <text transform="translate(1085 650) rotate(-53)">Havstenavägen</text>
        <text transform="translate(1178 593) rotate(-62)">Vadsbovägen</text>
        <text transform="translate(1187 623) rotate(-62)">Gustav Adolfs gata</text>
        <text transform="translate(1126 780) rotate(-76)">Gustav Adolfs gata</text>
        <text transform="translate(1199 767) rotate(-70)">Sveagatan</text>
        <text transform="translate(1224 767) rotate(-70)">Fältgatan</text>
        <text transform="translate(1267 777) rotate(10)">Helenius gata</text>
        <text transform="translate(1524 500) rotate(-9)">Nolhagavägen</text>
        <text transform="translate(1321 560) rotate(82)">Köpmannagatan</text>
        <text transform="translate(1375 643) rotate(14)">Grubbavägen</text>
        <text transform="translate(1587 612) rotate(-73)">Östra leden</text>
        <text transform="translate(1568 800) rotate(80)">Östra leden</text>
        <text transform="translate(1485 710) rotate(-28)">Hasslumsvägen</text>
        <text transform="translate(1477 765) rotate(-78)">Verkstadsvägen</text>
        <text transform="translate(1399 841) rotate(-22)">Verkstadsvägen</text>
        <text transform="translate(1332 790) rotate(-40)">Verkstadsvägen</text>
        <text transform="translate(1664 587) rotate(-50)">Stallsiksvägen</text>
        <text transform="translate(1775 582) rotate(-10)">Horsåsvägen</text>
        <text transform="translate(1885 521) rotate(-58)">Horsåsvägen</text>
        <text transform="translate(1894 618) rotate(-9)">Norra vägen</text>
        <text transform="translate(2002 613) rotate(4)">Norra vägen</text>
        <text transform="translate(2076 605) rotate(-14)">Norra vägen</text>
        <text transform="translate(1917 636) rotate(-20)">Olycksstigen</text>
        <text transform="translate(2027 568) rotate(-79)">Lassagårdsvägen</text>
        <text transform="translate(2053 657) rotate(74)">Borrvägen</text>
        <text transform="translate(1949 655) rotate(-80)">Allévägen</text>
        <text transform="translate(1932 706) rotate(-66)">Allévägen</text>
        <text transform="translate(1997 698)">Centralvägen</text>
        <text transform="translate(1959 750) rotate(20)">Räddningsvägen</text>
        <text transform="translate(1775 660) rotate(-14)">Gnistvägen</text>
        <text transform="translate(1705 702) rotate(-48)">Insatsvägen</text>
        <text transform="translate(1773 721)">Törnestorpsvägen</text>
        <text transform="translate(1799 743) rotate(-18)">Räddningsvägen</text>
        <text transform="translate(1694 761) rotate(6)">Vältvägen</text>
        <text transform="translate(1669 807)">Ventilvägen</text>
        <text transform="translate(1620 835) rotate(75)">Ventilgatan</text>
        <text transform="translate(1750 830) rotate(-14)">Kylarvägen</text>
        <text transform="translate(1796 870) rotate(-14)">Rattvägen</text>
        <text transform="translate(1753 943) rotate(-9)">Norregårdsvägen</text>
        <text transform="translate(1923 900) rotate(-4)">Norregårdsvägen</text>
        <text transform="translate(1924 935) rotate(87)">Storängsvägen</text>
        <text transform="translate(1921 979) rotate(-3)">Mejselvägen</text>
        <text transform="translate(1512 934) rotate(6)">Kaplansgatan</text>
        <text transform="translate(1403 917) rotate(6)">Kaplansgatan</text>
        <text transform="translate(1469 930) rotate(-82)">Bangårdsgatan</text>
        <text transform="translate(1393 955) rotate(9)">Mariestadsvägen</text>
        <text transform="translate(1378 1006) rotate(-3)">Prästgatan</text>
        <text transform="translate(1350 1032) rotate(24)">Klockvägen</text>
        <text transform="translate(1489 1041) rotate(-6)">Klockvägen</text>
        <text transform="translate(1173 964) rotate(8)">Rosengatan</text>
        <text transform="translate(649 860) rotate(-64)">Frostvägen</text>
        <text transform="translate(601 949) rotate(25)">Vårvägen</text>
        <text transform="translate(657 956) rotate(72)">Höstvägen</text>
        <text transform="translate(689 1022) rotate(76)">Södra Bergvägen</text>
        <text transform="translate(727 1129) rotate(68)">Södra Bergvägen</text>
        <text transform="translate(856 935) rotate(74)">Norra Bergvägen</text>
        <text transform="translate(770 1069) rotate(17)">Ekeliden</text>
        <text transform="translate(760 1096) rotate(12)">Falkvägen</text>
        <text transform="translate(962 823) rotate(-87)">Almvägen</text>
        <text transform="translate(1005 827) rotate(-55)">Vadsbovägen</text>
        <text transform="translate(1080 832) rotate(-9)">Vallevägen</text>
        <text transform="translate(1177 821) rotate(-15)">Vallevägen</text>
        <text transform="translate(925 871)">Valhallavägen</text>
        <text transform="translate(1137 832) rotate(-75)">Johans gata</text>
        <text transform="translate(920 1098) rotate(14)">Gudhemsgatan</text>
      </g>
      <g class="district">
        <text x="1264" y="674">FINLANDIA</text><text x="1259" y="723">ORRMALM</text>
        <text x="719" y="843">BILLINGS-</text><text x="719" y="856">SLUTTNINGEN</text>
        <text x="1866" y="852">HASSLUM</text><text x="2304" y="528">LÖCKETORP</text>
      </g>
      <text class="town" x="1061" y="1101">Skövde</text>

      <g class="shield">
        <rect x="832" y="543" width="38" height="12" rx="1"/><text x="851" y="549">O 2752</text>
        <rect x="869" y="650" width="38" height="12" rx="1"/><text x="888" y="656">O 2752</text>
        <rect x="963" y="732" width="38" height="12" rx="1"/><text x="982" y="738">O 2752</text>
        <rect x="985" y="1070" width="38" height="12" rx="1"/><text x="1004" y="1076">O 2752</text>
        <rect x="1141" y="622" width="38" height="12" rx="1"/><text x="1160" y="628">O 2754</text>
        <rect x="1041" y="749" width="38" height="12" rx="1"/><text x="1060" y="755">O 2754</text>
        <rect x="1374" y="503" width="38" height="12" rx="1"/><text x="1393" y="509">O 2890</text>
        <rect x="1441" y="505" width="38" height="12" rx="1"/><text x="1460" y="511">O 2890</text>
        <rect x="1437" y="636" width="38" height="12" rx="1"/><text x="1456" y="642">O 2890</text>
        <rect x="1240" y="815" width="38" height="12" rx="1"/><text x="1259" y="821">O 2890</text>
        <rect x="1067" y="931" width="38" height="12" rx="1"/><text x="1086" y="937">O 2753</text>
        <rect x="1274" y="1011" width="38" height="12" rx="1"/><text x="1293" y="1017">O 2753</text>
        <rect x="1394" y="1030" width="38" height="12" rx="1"/><text x="1413" y="1036">O 2753</text>
        <rect x="1486" y="968" width="38" height="12" rx="1"/><text x="1505" y="974">O 2753</text>
        <rect x="1602" y="1061" width="34" height="12" rx="1"/><text x="1619" y="1067">26;49</text>
        <rect x="1603" y="1102" width="34" height="12" rx="1"/><text x="1620" y="1108">26;49</text>
      </g>
      <g class="shield big">
        <rect x="1591" y="569" width="19" height="13" rx="2"/><text x="1600" y="576">2 6</text>
        <rect x="1558" y="672" width="19" height="13" rx="2"/><text x="1567" y="679">2 6</text>
        <rect x="1555" y="738" width="19" height="13" rx="2"/><text x="1564" y="745">2 6</text>
        <rect x="1572" y="850" width="19" height="13" rx="2"/><text x="1581" y="857">2 6</text>
        <rect x="1642" y="483" width="19" height="13" rx="2"/><text x="1651" y="490">2 6</text>
        <rect x="1766" y="897" width="19" height="13" rx="2"/><text x="1775" y="904">4 9</text>
        <rect x="1657" y="923" width="19" height="13" rx="2"/><text x="1666" y="930">4 9</text>
        <rect x="1607" y="940" width="19" height="13" rx="2"/><text x="1616" y="947">4 9</text>
        <rect x="1971" y="818" width="19" height="13" rx="2"/><text x="1980" y="825">4 9</text>
        <rect x="2067" y="799" width="19" height="13" rx="2"/><text x="2076" y="806">4 9</text>
        <rect x="2188" y="788" width="19" height="13" rx="2"/><text x="2197" y="795">4 9</text>
        <rect x="2335" y="807" width="19" height="13" rx="2"/><text x="2344" y="814">4 9</text>
      </g>

      <g class="markers">
        <use href="#b" x="1907" y="481"/><use href="#s" x="762" y="484"/><use href="#s" x="1257" y="484"/><use href="#s" x="719" y="488"/><use href="#c" x="1207" y="497"/><use href="#s" x="1156" y="499"/><use href="#s" x="1219" y="509"/><use href="#s" x="782" y="515"/><use href="#s" x="1267" y="518"/><use href="#s" x="657" y="522"/><use href="#s" x="1849" y="526"/><use href="#s" x="742" y="533"/><use href="#s" x="1267" y="533"/><use href="#s" x="1170" y="541"/><use href="#b" x="1278" y="542"/><use href="#s" x="1173" y="545"/><use href="#s" x="1124" y="549"/><use href="#s" x="1247" y="549"/><use href="#s" x="722" y="554"/><use href="#s" x="1211" y="559"/>
        <use href="#s" x="1369" y="586"/><use href="#s" x="1450" y="608"/><use href="#s" x="210" y="611"/><use href="#s" x="1160" y="694"/><use href="#s" x="1154" y="696"/><use href="#b" x="1200" y="696"/><use href="#s" x="2138" y="700"/><use href="#s" x="420" y="718"/><use href="#b" x="1898" y="727"/><use href="#s" x="319" y="751"/><use href="#b" x="1284" y="756"/><use href="#s" x="509" y="782"/><use href="#s" x="690" y="786"/><use href="#s" x="2481" y="798"/><use href="#s" x="1704" y="807"/><use href="#s" x="1304" y="818"/><use href="#b" x="1754" y="819"/><use href="#s" x="2119" y="822"/><use href="#b" x="2441" y="824"/><use href="#s" x="1641" y="834"/><use href="#s" x="1516" y="836"/>
        <use href="#s" x="1222" y="848"/><use href="#s" x="1264" y="849"/><use href="#s" x="1186" y="852"/><use href="#s" x="1274" y="852"/><use href="#b" x="1253" y="867"/><use href="#s" x="2357" y="873"/><use href="#b" x="974" y="879"/><use href="#b" x="1131" y="885"/><use href="#s" x="905" y="886"/><use href="#s" x="1118" y="897"/><use href="#s" x="1216" y="901"/><use href="#s" x="1275" y="902"/><use href="#b" x="1336" y="903"/><use href="#s" x="1284" y="904"/><use href="#s" x="1952" y="905"/><use href="#s" x="1011" y="911"/><use href="#s" x="706" y="912"/><use href="#s" x="1307" y="912"/><use href="#s" x="1186" y="914"/><use href="#s" x="922" y="915"/><use href="#s" x="1237" y="917"/><use href="#s" x="1360" y="920"/><use href="#s" x="1252" y="923"/><use href="#p" x="1304" y="909"/>
        <use href="#b" x="1231" y="928"/><use href="#s" x="1023" y="930"/><use href="#b" x="997" y="931"/><use href="#s" x="991" y="934"/><use href="#s" x="1240" y="937"/><use href="#s" x="152" y="944"/><use href="#s" x="1242" y="945"/><use href="#b" x="1261" y="947"/><use href="#s" x="916" y="964"/><use href="#c" x="955" y="949"/><use href="#s" x="1181" y="950"/><use href="#s" x="1257" y="957"/><use href="#s" x="1647" y="958"/><use href="#b" x="955" y="961"/><use href="#s" x="1339" y="961"/><use href="#b" x="1228" y="963"/><use href="#s" x="1266" y="963"/><use href="#s" x="1611" y="972"/><use href="#s" x="2147" y="973"/><use href="#b" x="970" y="974"/><use href="#s" x="1382" y="976"/><use href="#s" x="1285" y="977"/><use href="#s" x="899" y="982"/><use href="#s" x="1015" y="982"/><use href="#s" x="955" y="984"/><use href="#s" x="837" y="985"/><use href="#s" x="1210" y="990"/><use href="#s" x="1238" y="993"/><use href="#s" x="630" y="996"/><use href="#b" x="2108" y="998"/><use href="#s" x="2233" y="1000"/>
        <use href="#s" x="1532" y="1002"/><use href="#b" x="1425" y="1005"/><use href="#s" x="1211" y="1017"/><use href="#s" x="997" y="1020"/><use href="#s" x="2015" y="1023"/><use href="#s" x="507" y="1025"/><use href="#b" x="896" y="1028"/><use href="#b" x="955" y="1031"/><use href="#s" x="1213" y="1031"/><use href="#s" x="1375" y="1031"/><use href="#s" x="963" y="1034"/><use href="#b" x="1109" y="1039"/><use href="#s" x="1164" y="1039"/><use href="#b" x="847" y="1041"/><use href="#c" x="890" y="1043"/><use href="#s" x="866" y="1047"/><use href="#b" x="1451" y="1047"/><use href="#s" x="908" y="1050"/><use href="#s" x="902" y="1051"/><use href="#s" x="1195" y="1056"/><use href="#p" x="1193" y="1053"/><use href="#s" x="1248" y="1058"/><use href="#s" x="1115" y="1061"/><use href="#s" x="840" y="1062"/><use href="#s" x="1181" y="1062"/><use href="#s" x="858" y="1064"/><use href="#s" x="927" y="1077"/><use href="#s" x="1252" y="1078"/><use href="#s" x="1367" y="1100"/><use href="#s" x="1380" y="1100"/><use href="#s" x="2360" y="1100"/><use href="#s" x="1227" y="1102"/><use href="#s" x="1225" y="1108"/><use href="#s" x="2089" y="1129"/><use href="#s" x="1210" y="1130"/><use href="#s" x="125" y="1133"/>
      </g>
    </svg>
    <div class="zoom"><button type="button" aria-label="Zooma in">+</button><button type="button" aria-label="Zooma ut">−</button></div>
    <div class="attribution"><a href="#">Leaflet</a> | © <a href="#">OpenStreetMap</a> contributors</div>
  </section>

  <div class="lists">
    <section>
      <h2>Elsparkcyklar</h2>
      <table class="bikes">
        <thead><tr><th>Id</th><th>Status</th><th>Batterinivå %</th><th>Station</th></tr></thead>
        <tbody><tr><td></td><td></td><td></td><td></td></tr></tbody>
      </table>
    </section>
    <section>
      <h2>Stationer</h2>
      <table class="stations">
        <thead><tr><th>Id</th><th>Plats</th><th>Typ</th></tr></thead>
        <tbody><tr><td></td><td></td><td></td></tr></tbody>
      </table>
    </section>
  </div>
</main>
<div class="frame" aria-hidden="true"></div>
</body>
</html>
```
FILE: styles.css
```css
* { box-sizing: border-box; }
body {
  margin: 0;
  height: 100vh;
  overflow: hidden;
  background: #fff;
  color: #000;
  font-family: "Liberation Sans", Arial, sans-serif;
}
a { color: inherit; text-decoration: none; }
.sprite { position: absolute; width: 0; height: 0; }

.top {
  display: flex;
  align-items: center;
  gap: 99px;
  height: 136px;
  padding: 0 51px 2px;
  background: radial-gradient(ellipse at 85% -60%, #686868 0%, #727272 40%, #808080 75%);
  box-shadow: 0 2px 10px rgba(0, 0, 0, .45);
}
.badge {
  display: flex;
  align-items: center;
  justify-content: center;
  width: 82px;
  height: 82px;
  border-radius: 50%;
  background: #72f1b2;
  fill: #ffa227;
  stroke: #ffa227;
  stroke-width: .5px;
  box-shadow: 0 4px 10px rgba(0, 0, 0, .4);
}
.wordmark {
  width: 268px;
  height: 72px;
  overflow: visible;
  filter: drop-shadow(14px 16px 14px rgba(0, 0, 0, .3));
}

.page { padding: 61px 50px 0 51px; }
.nav { display: flex; color: #222; }
.nav-main { height: 32px; font-size: 28px; line-height: 32px; }
.nav-main a { min-width: 206px; }
.nav-main .active { color: #7b259f; }
.nav-city { margin-top: 69px; height: 30px; font-size: 26px; line-height: 30px; color: #444; }
.nav-city a { min-width: 209px; }
.nav-city .active { color: #72f1b2; }

.legend {
  display: flex;
  gap: 78px;
  margin: 62px 0 52px;
  padding: 0;
  list-style: none;
  font-size: 20px;
}
.legend li { display: flex; align-items: center; gap: 8px; }
.dot {
  display: flex;
  align-items: center;
  justify-content: center;
  width: 48px;
  height: 48px;
  border-radius: 50%;
}
.dot svg { width: 38px; height: 38px; }
.dot use { stroke: #000; stroke-width: .4px; }
.green { background: #72f1b2; }
.yellow { background: #e2e08e; }
.gray { background: #808080; fill: #fff; }
.gray use { stroke: #fff; }
.red { background: #ee8282; }
.purple { background: #7b259f; }
.orange { background: #ffa227; }

.map {
  position: relative;
  height: 621px;
  overflow: hidden;
  box-shadow: 0 2px 8px rgba(0, 0, 0, .4);
}
.canvas { display: block; width: 100%; height: 100%; }
.forest { fill: #e8ecdf; }
.park { fill: #d6e6c8; }
.grave { fill: #dae0d9; }
.retail { fill: #ece4f5; }
.building { fill: #eee5df; }
.water { fill: #b6d2ec; }
.land { fill: #f7f4ef; }
.ink { opacity: .86; }
.stream, .trail, .track, .casing, .road, .main-casing, .main-road { fill: none; stroke-linejoin: round; }
.stream { stroke: #a3c4e6; stroke-width: 1px; }
.stream .wide { stroke: #8db3de; stroke-width: 2px; }
.trail { stroke: #d3bdb0; stroke-width: 1px; stroke-dasharray: 2 1; }
.track { stroke: #dedad5; stroke-width: 1px; }
.casing { stroke: #d0ccc8; stroke-width: 4px; }
.road { stroke: #fff; stroke-width: 3px; }
.main-casing { stroke: #e3cfa4; stroke-width: 5px; }
.main-road { stroke: #fde7a8; stroke-width: 3px; }

.street, .district, .town, .shield text {
  font-family: "Noto Sans", sans-serif;
  text-anchor: middle;
  dominant-baseline: central;
}
.street, .district, .town { paint-order: stroke; stroke: rgba(247, 244, 239, .8); stroke-width: 2px; }
.street { font-size: 10px; fill: #6a625c; }
.district { font-size: 10px; font-weight: 700; fill: #5a2430; }
.town { font-size: 16px; fill: #333; }
.shield rect { fill: #fff; stroke: #aaa; stroke-width: 1px; }
.shield text { font-size: 10px; fill: #444; }
.shield.big text { font-size: 12px; }

.zoom {
  position: absolute;
  top: 15px;
  left: 15px;
  display: flex;
  flex-direction: column;
  border: 3px solid rgba(0, 0, 0, .2);
  border-radius: 7px;
  background-clip: padding-box;
}
.zoom button {
  width: 48px;
  height: 48px;
  padding: 0;
  border: 0;
  border-radius: 0 0 4px 4px;
  background: #fff;
  color: #000;
  font: 700 36px/48px "Liberation Sans", Arial, sans-serif;
}
.zoom button:first-child { border-bottom: 1px solid #ccc; border-radius: 4px 4px 0 0; }
.attribution {
  position: absolute;
  right: 0;
  bottom: 0;
  padding: 0 8px;
  background: rgba(255, 255, 255, .7);
  color: #333;
  font-size: 18px;
  line-height: 26px;
}
.attribution a { color: #0078a8; }

.lists { display: grid; grid-template-columns: 1fr 1fr; gap: 50px; }
h2 { margin: 53px 0 54px; font-size: 38px; line-height: 44px; }
table {
  width: 100%;
  table-layout: fixed;
  border-collapse: collapse;
  background: #424242;
  box-shadow: 0 4px 30px rgba(0, 0, 0, .3);
}
th {
  height: 89px;
  padding: 2px 0 0 37px;
  border-bottom: 2px solid #565656;
  color: #c8c8c8;
  font-size: 18px;
  text-align: left;
}
td { height: 90px; padding: 0; }
.bikes th:nth-child(1) { width: 15.6%; }
.bikes th:nth-child(2) { width: 19.1%; }
.bikes th:nth-child(3) { width: 33.1%; }
.stations th:nth-child(1) { width: 15.4%; }
.stations th:nth-child(2) { width: 47%; }

.frame {
  position: fixed;
  inset: 0;
  border-radius: 0 0 20px 20px;
  box-shadow: 0 0 0 30px #000, inset 2px -2px 0 0 rgba(255, 255, 255, .2);
  pointer-events: none;
}
```
